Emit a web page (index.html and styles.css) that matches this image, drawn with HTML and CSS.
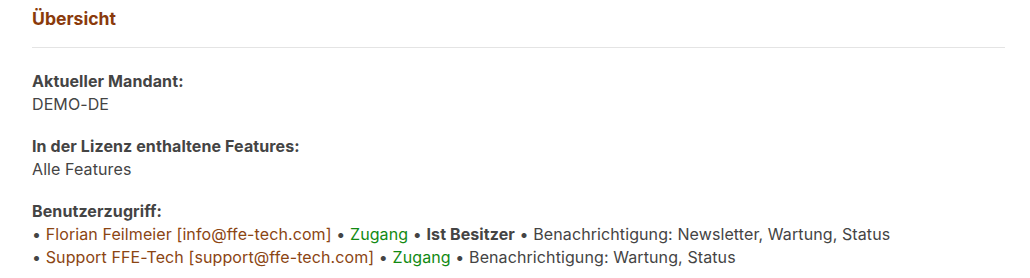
FILE: index.html
```html
<!DOCTYPE html>
<html lang="de">
<head>
<meta charset="utf-8">
<link rel="stylesheet" href="styles.css">
</head>
<body>
<section class="panel">
  <h2 class="title">Übersicht</h2>
  <dl class="info">
    <div class="item">
      <dt>Aktueller Mandant:</dt>
      <dd>DEMO-DE</dd>
    </div>
    <div class="item">
      <dt>In der Lizenz enthaltene Features:</dt>
      <dd>Alle Features</dd>
    </div>
    <div class="item">
      <dt>Benutzerzugriff:</dt>
      <dd>
        <div class="user">• <span class="name">Florian Feilmeier [info@ffe-tech.com]</span> • <span class="ok">Zugang</span> • <strong>Ist Besitzer</strong> • Benachrichtigung: Newsletter, Wartung, Status</div>
        <div class="user">• <span class="name">Support FFE-Tech [support@ffe-tech.com]</span> • <span class="ok">Zugang</span> • Benachrichtigung: Wartung, Status</div>
      </dd>
    </div>
  </dl>
</section>
</body>
</html>
```
FILE: styles.css
```css
html, body {
  margin: 0;
  background: #ffffff;
}
body {
  font-family: Inter, "Noto Sans", sans-serif;
  color: #444444;
}
.panel {
  padding: 7px 25px 0 32px;
}
.title {
  margin: 0;
  font-size: 17.6px;
  line-height: 24px;
  font-weight: 700;
  color: #8a3a0b;
  padding-bottom: 16px;
  border-bottom: 1px solid #e4e4e4;
}
.info {
  margin: 22px 0 0;
  font-size: 16px;
  line-height: 23px;
  letter-spacing: 0.1px;
}
.item {
  margin-bottom: 19px;
}
.info dt {
  font-weight: 700;
}
.info dd {
  margin: 0;
}
.name {
  color: #8b4513;
}
.ok {
  color: #128a12;
}
.info strong {
  font-weight: 700;
}
```
